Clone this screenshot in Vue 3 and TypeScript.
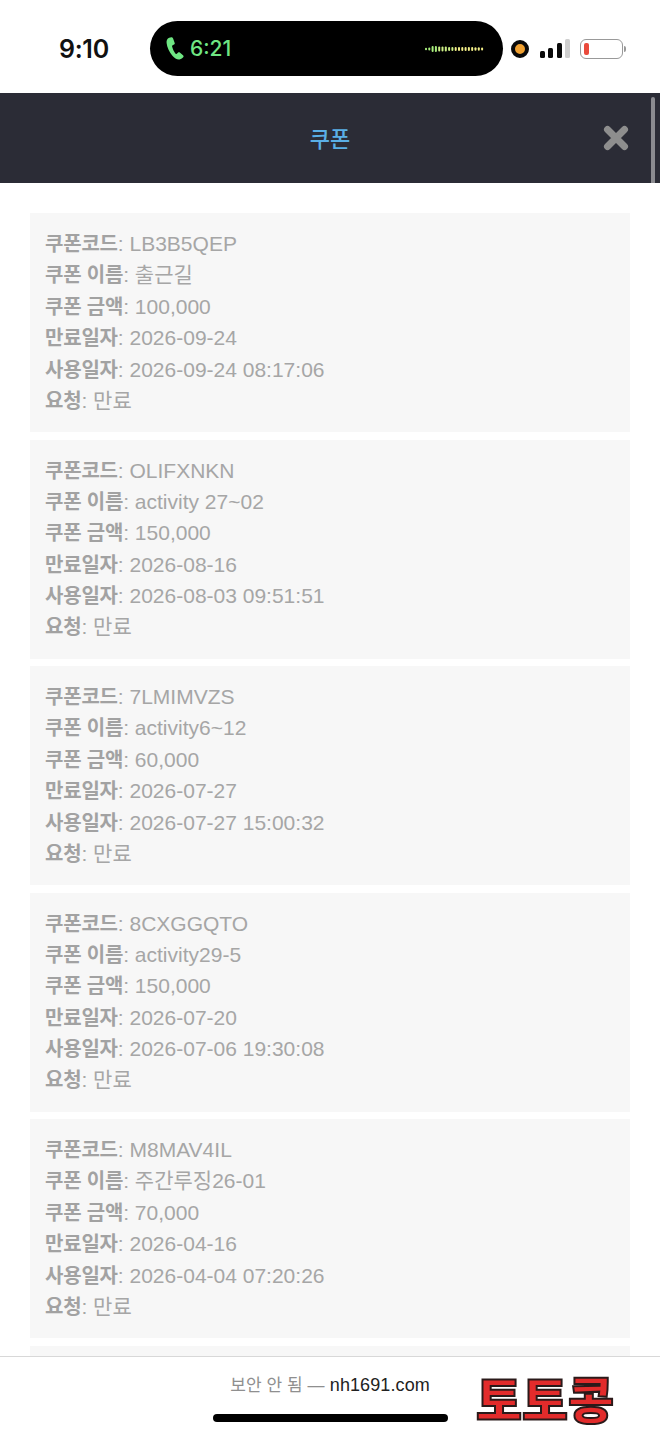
<script setup lang="ts">
interface Coupon {
  code: string;
  name: string;
  amount: string;
  expires: string;
  used: string;
  status: string;
}

const coupons: Coupon[] = [
  { code: "LB3B5QEP", name: "출근길", amount: "100,000", expires: "2026-09-24", used: "2026-09-24 08:17:06", status: "만료" },
  { code: "OLIFXNKN", name: "activity 27~02", amount: "150,000", expires: "2026-08-16", used: "2026-08-03 09:51:51", status: "만료" },
  { code: "7LMIMVZS", name: "activity6~12", amount: "60,000", expires: "2026-07-27", used: "2026-07-27 15:00:32", status: "만료" },
  { code: "8CXGGQTO", name: "activity29-5", amount: "150,000", expires: "2026-07-20", used: "2026-07-06 19:30:08", status: "만료" },
  { code: "M8MAV4IL", name: "주간루징26-01", amount: "70,000", expires: "2026-04-16", used: "2026-04-04 07:20:26", status: "만료" },
  { code: "", name: "", amount: "", expires: "", used: "", status: "" },
];

function rows(c: Coupon) {
  return [
    ["쿠폰코드", c.code],
    ["쿠폰 이름", c.name],
    ["쿠폰 금액", c.amount],
    ["만료일자", c.expires],
    ["사용일자", c.used],
    ["요청", c.status],
  ];
}

// waveform in the call pill: dot heights, fading green to yellow
const heights = [2.5, 3, 6, 6, 5, 5, 5, 4, 4, 4, 4, 4, 4, 4, 4, 3.5, 3.5, 3];
const bars = heights.map((h, i) => ({
  x: 1 + i * 3.3,
  h,
  fill: i < 4 ? "#a8ee7c" : i < 9 ? "#cdf086" : "#f2ee88",
}));
</script>

<template>
  <div class="page">
    <div class="status">
      <span class="clock">9:10</span>
      <div class="pill">
        <svg class="phone" viewBox="0 0 18 23" width="18" height="23">
          <path
            d="M3.2 0.8 C1.2 1.6 0.3 3.4 0.6 6 C1 10 3.2 15 6.4 18.8 C8.6 21.4 11.2 22.8 13.6 22.4 C15.2 22.1 16.6 21.2 17.4 20 C17.8 19.4 17.6 18.7 17 18.2 L13.8 15.6 C13.2 15.1 12.5 15.2 11.9 15.7 L10.8 16.7 C10.3 17.1 9.7 17 9.3 16.5 C7.9 14.6 6.7 12 6.1 9.6 C5.9 9 6.1 8.5 6.7 8.2 L8 7.6 C8.7 7.2 8.9 6.6 8.7 5.9 L7.1 1.6 C6.8 0.8 6.1 0.3 5.3 0.3 C4.6 0.3 3.9 0.5 3.2 0.8 Z"
            fill="#6fe683"
          />
        </svg>
        <span class="call">6:21</span>
        <svg class="wave" viewBox="0 0 60 10" width="60" height="10">
          <rect
            v-for="(b, i) in bars"
            :key="i"
            :x="b.x"
            :y="5 - b.h / 2"
            width="2"
            :height="b.h"
            rx="1"
            :fill="b.fill"
          />
        </svg>
      </div>
      <span class="rec"></span>
      <div class="signal">
        <i class="s1"></i>
        <i class="s2"></i>
        <i class="s3"></i>
        <i class="s4"></i>
      </div>
      <div class="battery">
        <span class="level"></span>
      </div>
      <span class="nub"></span>
    </div>

    <header class="head">
      <h1>쿠폰</h1>
      <svg class="close" viewBox="0 0 26 26" width="26" height="26">
        <path d="M4.5 4.5 L21.5 21.5 M21.5 4.5 L4.5 21.5" stroke="#8e8e8e" stroke-width="7" stroke-linecap="round" />
      </svg>
      <span class="thumb"></span>
    </header>

    <main class="list">
      <section v-for="(c, i) in coupons" :key="i" class="card">
        <template v-if="c.code">
          <p v-for="r in rows(c)" :key="r[0]" class="row">
            <b>{{ r[0] }}</b><span class="sep">:</span> {{ r[1] }}
          </p>
        </template>
      </section>
    </main>

    <footer class="bar">
      <p class="url"><span class="warn">보안 안 됨 —</span> nh1691.com</p>
      <span class="logo">토토콩</span>
      <span class="home"></span>
    </footer>
  </div>
</template>

<style scoped>
.page {
  position: relative;
  width: 660px;
  height: 1434px;
  overflow: hidden;
  background: #fff;
  font-family: "Liberation Sans", "Noto Sans CJK KR", sans-serif;
}

.status {
  height: 93px;
  display: flex;
  align-items: center;
  padding-top: 4px;
  box-sizing: border-box;
}
.clock {
  margin-left: 59px;
  width: 91px;
  font-family: Inter, "Liberation Sans", sans-serif;
  font-size: 25px;
  font-weight: 600;
  color: #111;
  letter-spacing: -0.3px;
}
.pill {
  width: 353px;
  height: 55px;
  border-radius: 28px;
  background: #000;
  display: flex;
  align-items: center;
  padding: 0 19px 0 16px;
  box-sizing: border-box;
}
.call {
  margin-left: 6px;
  flex: 1;
  font-family: Inter, "Liberation Sans", sans-serif;
  font-size: 21px;
  font-weight: 500;
  color: #6fe683;
}
.rec {
  margin-left: 8px;
  width: 10px;
  height: 10px;
  border: 4px solid #0a0a0a;
  border-radius: 50%;
  background: #f0a030;
}
.signal {
  margin-left: 11px;
  display: flex;
  align-items: flex-end;
  gap: 3.4px;
  height: 19px;
}
.signal i {
  width: 5px;
  border-radius: 1.5px;
  background: #0a0a0a;
}
.signal .s1 { height: 7px; }
.signal .s2 { height: 10px; }
.signal .s3 { height: 15px; }
.signal .s4 { height: 19px; background: #cfcfcf; }
.battery {
  margin-left: 10px;
  width: 43px;
  height: 20px;
  border: 1.5px solid #999;
  border-radius: 6px;
  box-sizing: border-box;
  padding: 3px;
  display: flex;
}
.level {
  width: 5px;
  border-radius: 2px;
  background: #ea4a3c;
}
.nub {
  margin-left: 1px;
  width: 2px;
  height: 6px;
  border-radius: 0 2px 2px 0;
  background: #999;
}

.head {
  position: relative;
  height: 90px;
  background: #2b2c36;
  display: flex;
  align-items: center;
  justify-content: center;
}
.head h1 {
  margin: 0 0 2px;
  font-size: 22px;
  font-weight: 500;
  color: #5aafe6;
}
.close {
  position: absolute;
  right: 31px;
  top: 32px;
}
.thumb {
  position: absolute;
  right: 5px;
  top: 4px;
  bottom: 0;
  width: 4px;
  border-radius: 2px 2px 0 0;
  background: #8b8b90;
}

.list {
  padding: 30px 30px 0;
  display: flex;
  flex-direction: column;
  gap: 7.5px;
}
.card {
  height: 219px;
  flex-shrink: 0;
  box-sizing: border-box;
  padding: 15px;
  background: #f7f7f7;
}
.row {
  margin: 0;
  height: 31.4px;
  line-height: 31.4px;
  font-size: 21px;
  color: #a6a6a6;
  white-space: nowrap;
}
.row b {
  font-size: 20px;
  font-weight: 700;
  letter-spacing: -0.2px;
  color: #a2a2a2;
}

.bar {
  position: absolute;
  left: 0;
  right: 0;
  bottom: 0;
  height: 78px;
  background: #fff;
  border-top: 1px solid #d8d8d8;
  box-sizing: border-box;
}
.url {
  margin: 0;
  padding-top: 16px;
  text-align: center;
  font-size: 18px;
  line-height: 24px;
  letter-spacing: 0.1px;
  color: #222;
}
.warn {
  font-size: 17px;
  color: #8f8f8f;
}
.logo {
  position: absolute;
  left: 476px;
  top: 12px;
  font-family: "Noto Sans CJK KR", sans-serif;
  font-size: 50px;
  line-height: 56px;
  font-weight: 900;
  color: #e22b2b;
  -webkit-text-stroke: 2px #2a1a1a;
}
.home {
  position: absolute;
  left: 213px;
  top: 57px;
  width: 235px;
  height: 8px;
  border-radius: 4px;
  background: #000;
}
</style>
